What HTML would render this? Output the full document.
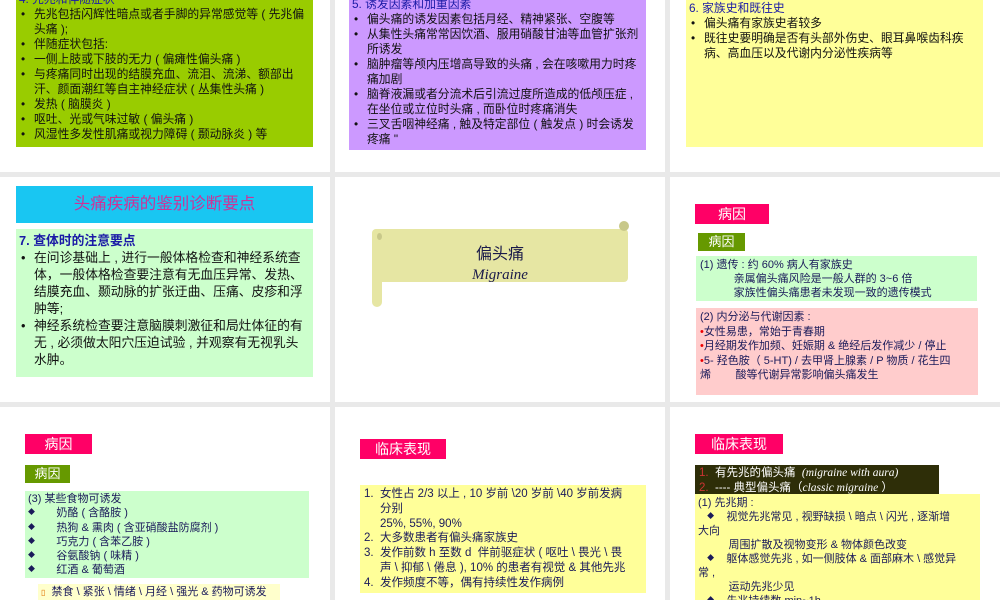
<!DOCTYPE html>
<html><head><meta charset="utf-8"><style>
*{margin:0;padding:0;box-sizing:border-box}
body{width:1000px;height:600px;background:#e9e9e9;position:relative;overflow:hidden;font-family:"Liberation Sans","Noto Sans CJK SC",sans-serif;color:#111}
.s{position:absolute;background:#fff;overflow:hidden}
.a{position:absolute}
.t{font-size:11.8px;line-height:15px}
ul{list-style:none}
li{position:relative;padding-left:15px}
li:before{content:"•";position:absolute;left:2px;top:0}
.bl{color:#1a1aa6}
.mg{position:absolute;background:#ff0066;color:#fff;font-size:14px;line-height:20px;text-align:center}
.gr{position:absolute;background:#669900;color:#fff;font-size:13px;line-height:18px;text-align:center}
.nv{color:#1a1a5a}
.d{font-size:7px;vertical-align:2px}
</style></head><body>
<div class="s" style="left:0;top:0;width:330px;height:172px">
 <div class="a t" style="left:16px;top:0;width:297px;height:147px;background:#99cc00;padding:0 3px">
  <div class="bl" style="margin-top:-8px">4. 先兆和伴随症状</div>
  <ul><li>先兆包括闪辉性暗点或者手脚的异常感觉等 ( 先兆偏头痛 );</li><li>伴随症状包括:</li><li>一侧上肢或下肢的无力 ( 偏瘫性偏头痛 )</li><li>与疼痛同时出现的结膜充血、流泪、流涕、额部出汗、颜面潮红等自主神经症状 ( 丛集性头痛 )</li><li>发热 ( 脑膜炎 )</li><li>呕吐、光或气味过敏 ( 偏头痛 )</li><li>风湿性多发性肌痛或视力障碍 ( 颞动脉炎 ) 等</li></ul>
 </div>
</div>
<div class="s" style="left:335px;top:0;width:330px;height:172px">
 <div class="a t" style="left:14px;top:0;width:297px;height:150px;background:#cc99ff;padding:0 3px">
  <div class="bl" style="margin-top:-3px">5. 诱发因素和加重因素</div>
  <ul><li>偏头痛的诱发因素包括月经、精神紧张、空腹等</li><li>从集性头痛常常因饮酒、服用硝酸甘油等血管扩张剂所诱发</li><li>脑肿瘤等颅内压增高导致的头痛 , 会在咳嗽用力时疼痛加剧</li><li>脑脊液漏或者分流术后引流过度所造成的低颅压症 , 在坐位或立位时头痛 , 而卧位时疼痛消失</li><li>三叉舌咽神经痛 , 触及特定部位 ( 触发点 ) 时会诱发疼痛 "</li></ul>
 </div>
</div>
<div class="s" style="left:670px;top:0;width:330px;height:172px">
 <div class="a t" style="left:16px;top:0;width:297px;height:147px;background:#ffff99;padding:0 0 0 3px">
  <div class="bl" style="margin-top:1px">6. 家族史和既往史</div>
  <ul><li>偏头痛有家族史者较多</li><li>既往史要明确是否有头部外伤史、眼耳鼻喉齿科疾病、高血压以及代谢内分泌性疾病等</li></ul>
 </div>
</div>
<div class="s" style="left:0;top:177px;width:330px;height:225px">
 <div class="a" style="left:16px;top:9px;width:297px;height:37px;background:#19c6f2;color:#cc3399;font-size:16.5px;line-height:37px;text-align:center">头痛疾病的鉴别诊断要点</div>
 <div class="a" style="left:16px;top:52px;width:297px;height:148px;background:#ccffcc;padding:3px 3px;font-size:12.8px;line-height:17px">
  <div class="bl" style="font-weight:bold">7. 查体时的注意要点</div>
  <ul><li>在问诊基础上 , 进行一般体格检查和神经系统查体，一般体格检查要注意有无血压异常、发热、结膜充血、颞动脉的扩张迂曲、压痛、皮疹和浮肿等;</li><li>神经系统检查要注意脑膜刺激征和局灶体征的有无 , 必须做太阳穴压迫试验 , 并观察有无视乳头水肿。</li></ul>
 </div>
</div>
<div class="s" style="left:335px;top:177px;width:330px;height:225px">
 <div class="a" style="left:37px;top:52px;width:256px;height:53px;background:#e6e6a3;border-radius:4px"></div>
 <div class="a" style="left:37px;top:52px;width:10px;height:78px;background:#e6e6a3;border-radius:5px"></div>
 <div class="a" style="left:284px;top:44px;width:10px;height:10px;background:#c8c88a;border-radius:50%"></div>
 <div class="a" style="left:42px;top:56px;width:5px;height:7px;background:#c8c88a;border-radius:50%"></div>
 <div class="a" style="left:37px;top:68px;width:256px;text-align:center;color:#1a1a4a;font-size:16px;line-height:20px">偏头痛</div>
 <div class="a" style="left:37px;top:90px;width:256px;text-align:center;color:#1a1a4a;font-size:15px;font-style:italic;font-family:'Liberation Serif',serif">Migraine</div>
</div>
<div class="s" style="left:670px;top:177px;width:330px;height:225px">
 <div class="mg" style="left:25px;top:27px;width:74px">病因</div>
 <div class="gr" style="left:28px;top:56px;width:47px">病因</div>
 <div class="a nv" style="left:26px;top:79px;width:281px;height:45px;background:#ccffcc;padding:2px 4px;font-size:11px;line-height:14px">(1) 遗传 : 约 60% 病人有家族史<br>&nbsp;&nbsp;&nbsp;&nbsp;&nbsp;&nbsp;&nbsp;&nbsp;&nbsp;&nbsp;&nbsp;亲属偏头痛风险是一般人群的 3~6 倍<br>&nbsp;&nbsp;&nbsp;&nbsp;&nbsp;&nbsp;&nbsp;&nbsp;&nbsp;&nbsp;&nbsp;家族性偏头痛患者未发现一致的遗传模式</div>
 <div class="a nv" style="left:26px;top:131px;width:282px;height:87px;background:#ffcccc;padding:2px 4px;font-size:11px;line-height:14.5px">(2) 内分泌与代谢因素 :<br><span style="color:#e00">•</span>女性易患，常始于青春期<br><span style="color:#e00">•</span>月经期发作加频、妊娠期 &amp; 绝经后发作减少 / 停止<br><span style="color:#e00">•</span>5- 羟色胺（ 5-HT) / 去甲肾上腺素 / P 物质 / 花生四<br>烯&nbsp;&nbsp;&nbsp;&nbsp;&nbsp;&nbsp;&nbsp;&nbsp;酸等代谢异常影响偏头痛发生</div>
</div>
<div class="s" style="left:0;top:407px;width:330px;height:193px">
 <div class="mg" style="left:25px;top:27px;width:67px">病因</div>
 <div class="gr" style="left:25px;top:58px;width:45px">病因</div>
 <div class="a nv" style="left:25px;top:84px;width:284px;height:87px;background:#ccffcc;padding:1px 3px;font-size:11px;line-height:14.3px">(3) 某些食物可诱发<div><span class="d">◆</span>&nbsp;&nbsp;&nbsp;&nbsp;&nbsp;&nbsp;&nbsp;奶酪 ( 含酪胺 )</div><div><span class="d">◆</span>&nbsp;&nbsp;&nbsp;&nbsp;&nbsp;&nbsp;&nbsp;热狗 &amp; 熏肉 ( 含亚硝酸盐防腐剂 )</div><div><span class="d">◆</span>&nbsp;&nbsp;&nbsp;&nbsp;&nbsp;&nbsp;&nbsp;巧克力 ( 含苯乙胺 )</div><div><span class="d">◆</span>&nbsp;&nbsp;&nbsp;&nbsp;&nbsp;&nbsp;&nbsp;谷氨酸钠 ( 味精 )</div><div><span class="d">◆</span>&nbsp;&nbsp;&nbsp;&nbsp;&nbsp;&nbsp;&nbsp;红酒 &amp; 葡萄酒</div></div>
 <div class="a nv" style="left:38px;top:177px;width:242px;height:18px;background:#ffffcc;padding-left:3px;font-size:11px;line-height:16px"><span style="color:#e07000;font-size:8px">▯</span>&nbsp;&nbsp;禁食 \ 紧张 \ 情绪 \ 月经 \ 强光 &amp; 药物可诱发</div>
</div>
<div class="s" style="left:335px;top:407px;width:330px;height:193px">
 <div class="mg" style="left:25px;top:32px;width:86px">临床表现</div>
 <div class="a nv" style="left:25px;top:78px;width:286px;height:108px;background:#ffff99;padding:2px 4px;font-size:11.5px;line-height:14.8px">
  1.&nbsp;&nbsp;女性占 2/3 以上 , 10 岁前 \20 岁前 \40 岁前发病<br>&nbsp;&nbsp;&nbsp;&nbsp;&nbsp;分别<br>&nbsp;&nbsp;&nbsp;&nbsp;&nbsp;25%, 55%, 90%<br>2.&nbsp;&nbsp;大多数患者有偏头痛家族史<br>3.&nbsp;&nbsp;发作前数 h 至数 d&nbsp; 伴前驱症状 ( 呕吐 \ 畏光 \ 畏<br>&nbsp;&nbsp;&nbsp;&nbsp;&nbsp;声 \ 抑郁 \ 倦息 ), 10% 的患者有视觉 &amp; 其他先兆<br>4.&nbsp;&nbsp;发作频度不等，偶有持续性发作病例
 </div>
</div>
<div class="s" style="left:670px;top:407px;width:330px;height:193px">
 <div class="mg" style="left:25px;top:27px;width:88px">临床表现</div>
 <div class="a" style="left:25px;top:58px;width:244px;height:30px;background:#2e2e08;color:#fff;padding:1px 4px;font-size:11.5px;line-height:14.5px;overflow:hidden"><span style="color:#c33">1.</span>&nbsp;&nbsp;有先兆的偏头痛 &nbsp;<i style="font-family:'Liberation Serif',serif">(migraine with aura)</i><br><span style="color:#c33">2.</span>&nbsp;&nbsp;---- 典型偏头痛（<i style="font-family:'Liberation Serif',serif">classic migraine</i> ）</div>
 <div class="a nv" style="left:25px;top:87px;width:285px;height:110px;background:#ffff99;padding:2px 3px;font-size:11px;line-height:14px">(1) 先兆期 :<br>&nbsp;&nbsp;&nbsp;<span class="d">◆</span>&nbsp;&nbsp;&nbsp;&nbsp;视觉先兆常见 , 视野缺损 \ 暗点 \ 闪光 , 逐渐增<br>大向<br>&nbsp;&nbsp;&nbsp;&nbsp;&nbsp;&nbsp;&nbsp;&nbsp;&nbsp;&nbsp;周围扩散及视物变形 &amp; 物体颜色改变<br>&nbsp;&nbsp;&nbsp;<span class="d">◆</span>&nbsp;&nbsp;&nbsp;&nbsp;躯体感觉先兆 , 如一侧肢体 &amp; 面部麻木 \ 感觉异<br>常 ,<br>&nbsp;&nbsp;&nbsp;&nbsp;&nbsp;&nbsp;&nbsp;&nbsp;&nbsp;&nbsp;运动先兆少见<br>&nbsp;&nbsp;&nbsp;<span class="d">◆</span>&nbsp;&nbsp;&nbsp;&nbsp;先兆持续数 min~1h</div>
</div>
</body></html>
